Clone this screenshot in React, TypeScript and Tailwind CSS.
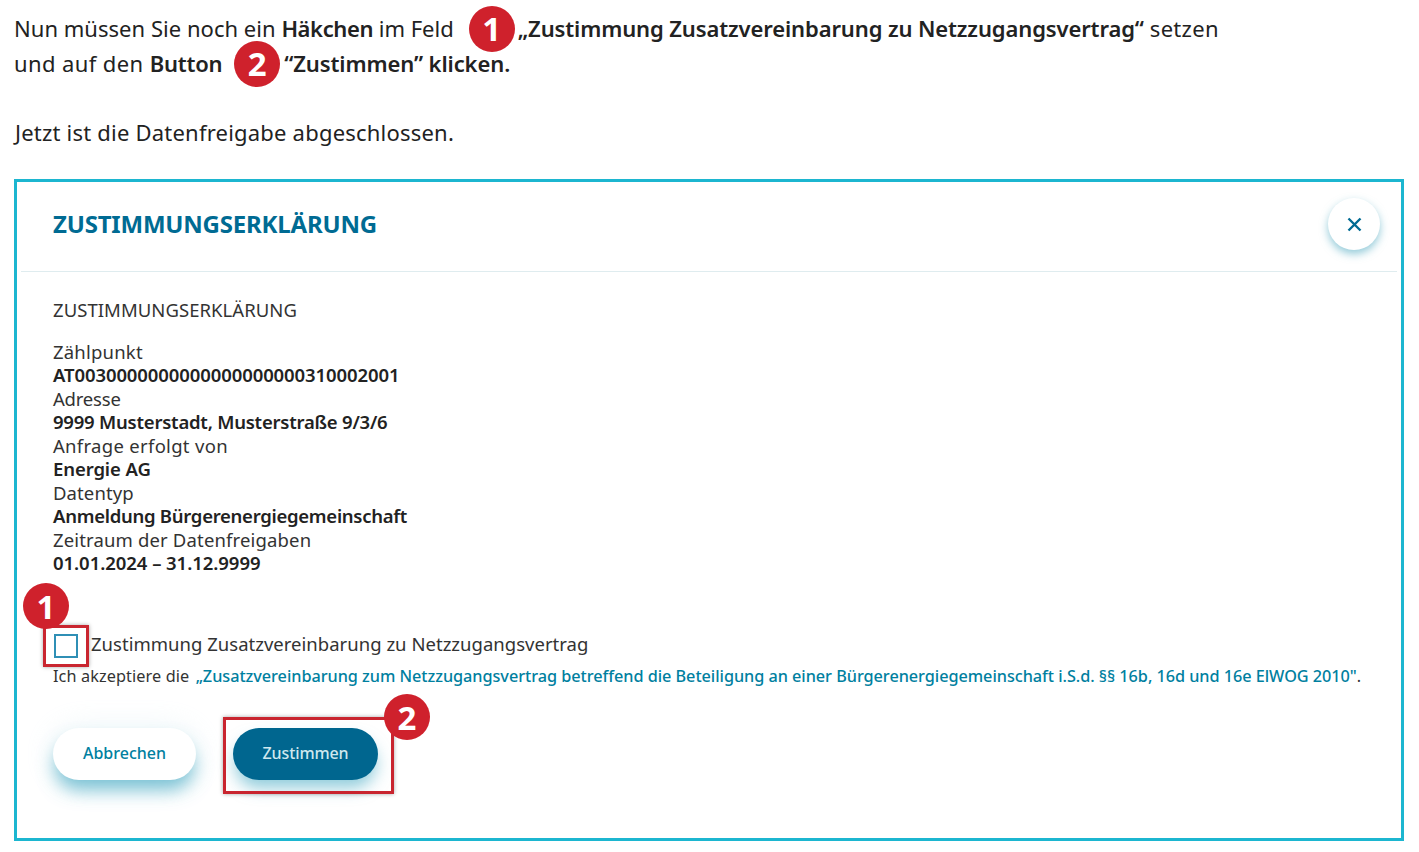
import React from "react";

function Badge({ n, className = "" }: { n: string; className?: string }) {
  return (
    <span
      className={`flex h-[46px] w-[46px] items-center justify-center rounded-full bg-[#cf212c] text-[33px] font-bold leading-none text-white ${className}`}
    >
      {n}
    </span>
  );
}

const rows: [string, string][] = [
  ["Zählpunkt", "tracking-[0.2px]"],
  ["AT0030000000000000000000310002001", "font-semibold text-[#222] tracking-[-0.1px]"],
  ["Adresse", "tracking-[-0.2px]"],
  ["9999 Musterstadt, Musterstraße 9/3/6", "font-semibold text-[#222] tracking-[-0.22px]"],
  ["Anfrage erfolgt von", "tracking-[0.3px]"],
  ["Energie AG", "font-semibold text-[#222] tracking-[-0.1px]"],
  ["Datentyp", "tracking-[0.1px]"],
  ["Anmeldung Bürgerenergiegemeinschaft", "font-semibold text-[#222] tracking-[-0.28px]"],
  ["Zeitraum der Datenfreigaben", "tracking-[0.15px]"],
  ["01.01.2024 – 31.12.9999", "font-semibold text-[#222] tracking-[-0.05px]"],
];

export default function App() {
  return (
    <div className="h-[852px] w-[1419px] overflow-hidden bg-white pl-[14px] font-['Noto_Sans',sans-serif] text-[#2b2b2b]">
      <div className="pt-[11px] text-[22px] leading-[35px] text-[#222]">
        <div className="flex h-[35px] items-center whitespace-nowrap">
          <span className="tracking-[0.03px]">Nun müssen Sie noch ein&nbsp;</span>
          <b className="font-semibold tracking-[-0.4px]">Häkchen</b>
          <span>&nbsp;im Feld</span>
          <Badge n="1" className="ml-[15px] mr-[3px]" />
          <b className="font-semibold tracking-[-0.12px]">„Zustimmung Zusatzvereinbarung zu Netzzugangsvertrag“</b>
          <span className="tracking-[0.3px]">&nbsp;setzen</span>
        </div>
        <div className="flex h-[35px] items-center whitespace-nowrap">
          <span className="tracking-[0.4px]">und auf den&nbsp;</span>
          <b className="font-semibold tracking-[-0.25px]">Button</b>
          <Badge n="2" className="ml-[12px] mr-[4px]" />
          <b className="font-semibold tracking-[-0.1px]">“Zustimmen” klicken.</b>
        </div>
        <p className="mt-[34px] pl-[1px] tracking-[0.21px]">Jetzt ist die Datenfreigabe abgeschlossen.</p>
      </div>

      <div className="relative mt-[29px] h-[662px] w-[1390px] border-[3px] border-[#1cb6d0] pl-[4px] pr-[4px]">
        <div className="flex h-[90px] items-center justify-between border-b border-[#dfecef] pb-[5px] pl-[32px] pr-[17px]">
          <h1 className="text-[24px] font-bold tracking-[-0.2px] text-[#006b93]">ZUSTIMMUNGSERKLÄRUNG</h1>
          <button className="flex h-[52px] w-[52px] items-center justify-center rounded-full bg-white shadow-[0_4px_8px_rgba(60,160,185,0.55)]">
            <svg width="15" height="15" viewBox="0 0 15 15" fill="none" stroke="#006b93" strokeWidth="2.4">
              <path d="M1.5 1.5 13.5 13.5M13.5 1.5 1.5 13.5" />
            </svg>
          </button>
        </div>

        <div className="pl-[32px] pt-[26px] text-[18.5px] leading-[23.5px] text-[#333]">
          <p className="tracking-[0.05px]">ZUSTIMMUNGSERKLÄRUNG</p>
          <div className="mt-[18px]">
            {rows.map(([t, cls]) => (
              <div key={t} className={cls}>
                {t}
              </div>
            ))}
          </div>

          <div className="mt-[59px] flex h-[24px] items-center">
            <span className="ml-[1px] h-[24px] w-[24px] border-2 border-[#2f8fb5] bg-white" />
            <span className="mb-[4px] ml-[13px] tracking-[0.02px]">Zustimmung Zusatzvereinbarung zu Netzzugangsvertrag</span>
          </div>
          <p className="mt-[6px] whitespace-nowrap text-[16.25px] leading-[24px]">
            <span className="tracking-[0.1px]">Ich akzeptiere die&nbsp;</span>
            <span className="ml-[2px] font-medium tracking-[-0.04px] text-[#00809f]">
              „Zusatzvereinbarung zum Netzzugangsvertrag betreffend die Beteiligung an einer Bürgerenergiegemeinschaft i.S.d. §§ 16b, 16d und 16e ElWOG 2010"
            </span>
            .
          </p>

          <div className="mt-[40px] flex gap-[37px]">
            <button className="h-[52px] w-[143px] rounded-[26px] bg-white text-[16px] font-medium text-[#00809f] shadow-[0_12px_18px_-2px_rgba(70,170,195,0.7),0_0_30px_rgba(225,240,245,0.6)]">
              Abbrechen
            </button>
            <button className="h-[52px] w-[145px] rounded-[26px] bg-[#00668f] text-[16px] font-medium tracking-[-0.1px] text-[#cfe8ee] shadow-[0_10px_16px_-2px_rgba(70,170,195,0.6)]">
              Zustimmen
            </button>
          </div>
        </div>

        <span className="absolute left-[26px] top-[443px] h-[42px] w-[46px] border-[3px] border-[#c9252f] shadow-[0_0_4px_rgba(0,0,0,0.35)]" />
        <span className="absolute left-[206px] top-[535px] h-[77px] w-[171px] border-[3px] border-[#c9252f] shadow-[0_0_4px_rgba(0,0,0,0.35)]" />
        <Badge n="1" className="absolute left-[6px] top-[401px]" />
        <Badge n="2" className="absolute left-[367px] top-[512px]" />
      </div>
    </div>
  );
}
